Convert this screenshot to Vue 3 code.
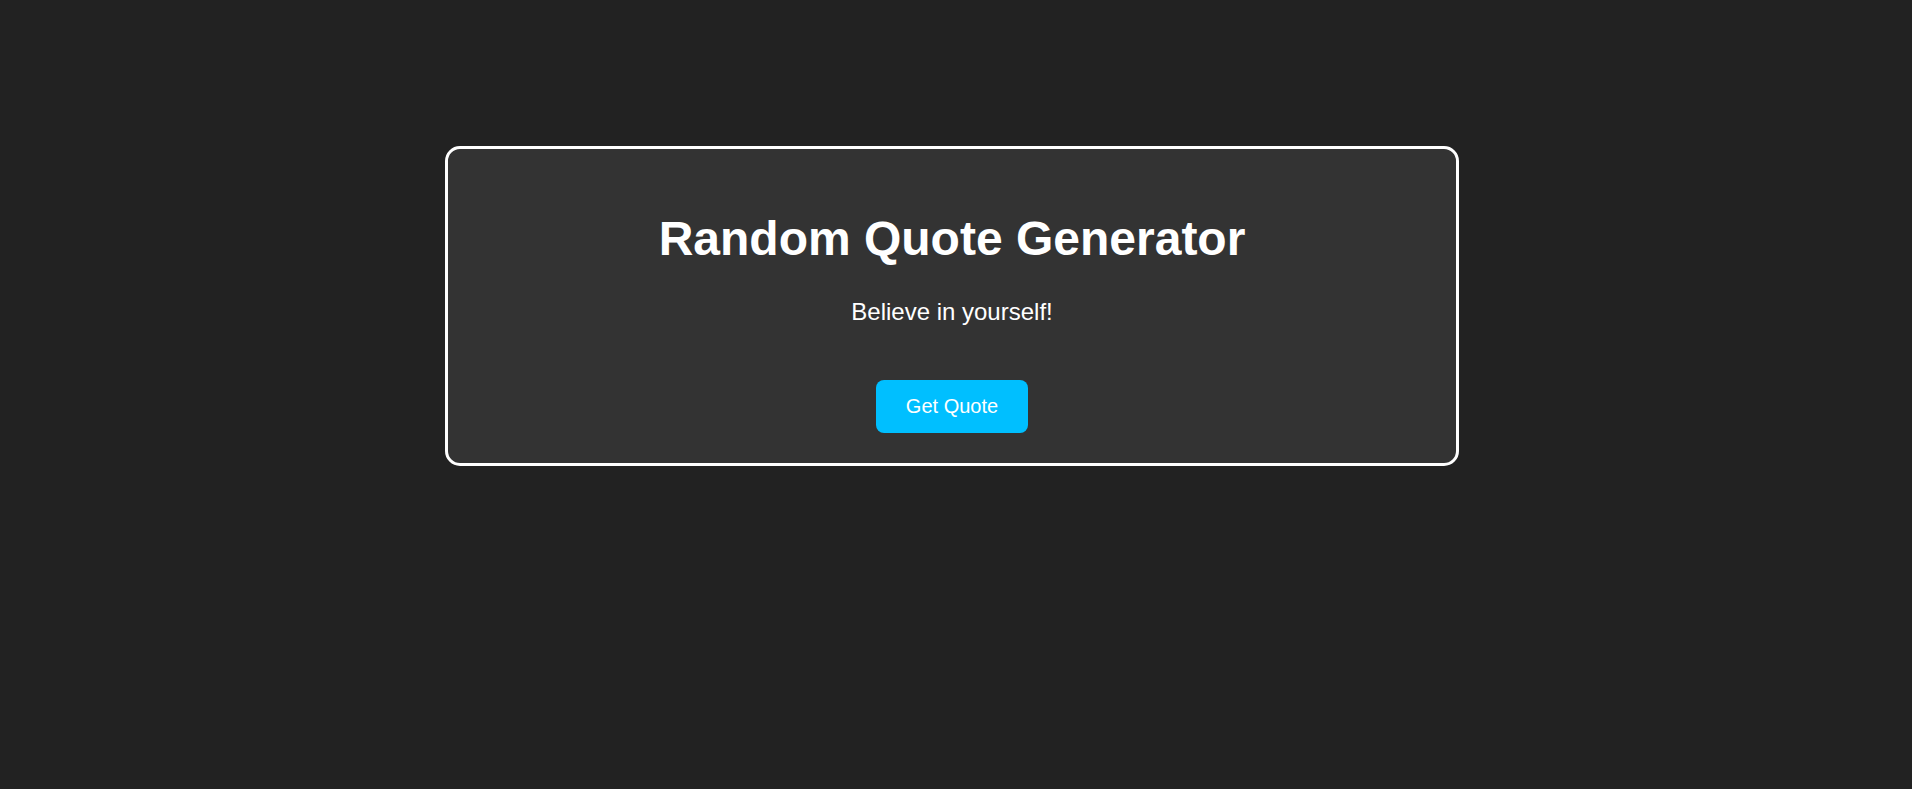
<script setup>
import { ref } from 'vue'

const quotes = [
  'Believe in yourself!',
  'Stay positive and work hard.',
  'Every day is a new beginning.',
  'Dream big and dare to fail.'
]
const current = ref(0)

function getQuote() {
  const step = 1 + Math.floor(Math.random() * (quotes.length - 1))
  current.value = (current.value + step) % quotes.length
}
</script>

<template>
  <main class="page">
    <section class="card">
      <h1 class="title">Random Quote Generator</h1>
      <p class="quote" aria-live="polite">{{ quotes[current] }}</p>
      <button class="action" type="button" @click="getQuote">Get Quote</button>
    </section>
  </main>
</template>

<style>
body {
  margin: 0;
  background: #222;
}
</style>

<style scoped>
.page {
  box-sizing: border-box;
  min-height: 100vh;
  padding: 146px 12px 40px 4px;
  font-family: Arial, "Liberation Sans", sans-serif;
  color: #fff;
  text-align: center;
}

.card {
  width: 50%;
  margin: 0 auto;
  padding: 30px;
  border: 3px solid #fff;
  border-radius: 15px;
  background: #333;
}

.title {
  margin: 32px 0;
  font-size: 48px;
  line-height: 55px;
}

.quote {
  margin: 0 0 55px;
  font-size: 24px;
  line-height: 27px;
}

.action {
  display: block;
  margin: 0 auto;
  padding: 15px 30px;
  border: none;
  border-radius: 8px;
  background: #00bfff;
  color: #fff;
  font-family: inherit;
  font-size: 20px;
  line-height: 23px;
  cursor: pointer;
}
</style>
